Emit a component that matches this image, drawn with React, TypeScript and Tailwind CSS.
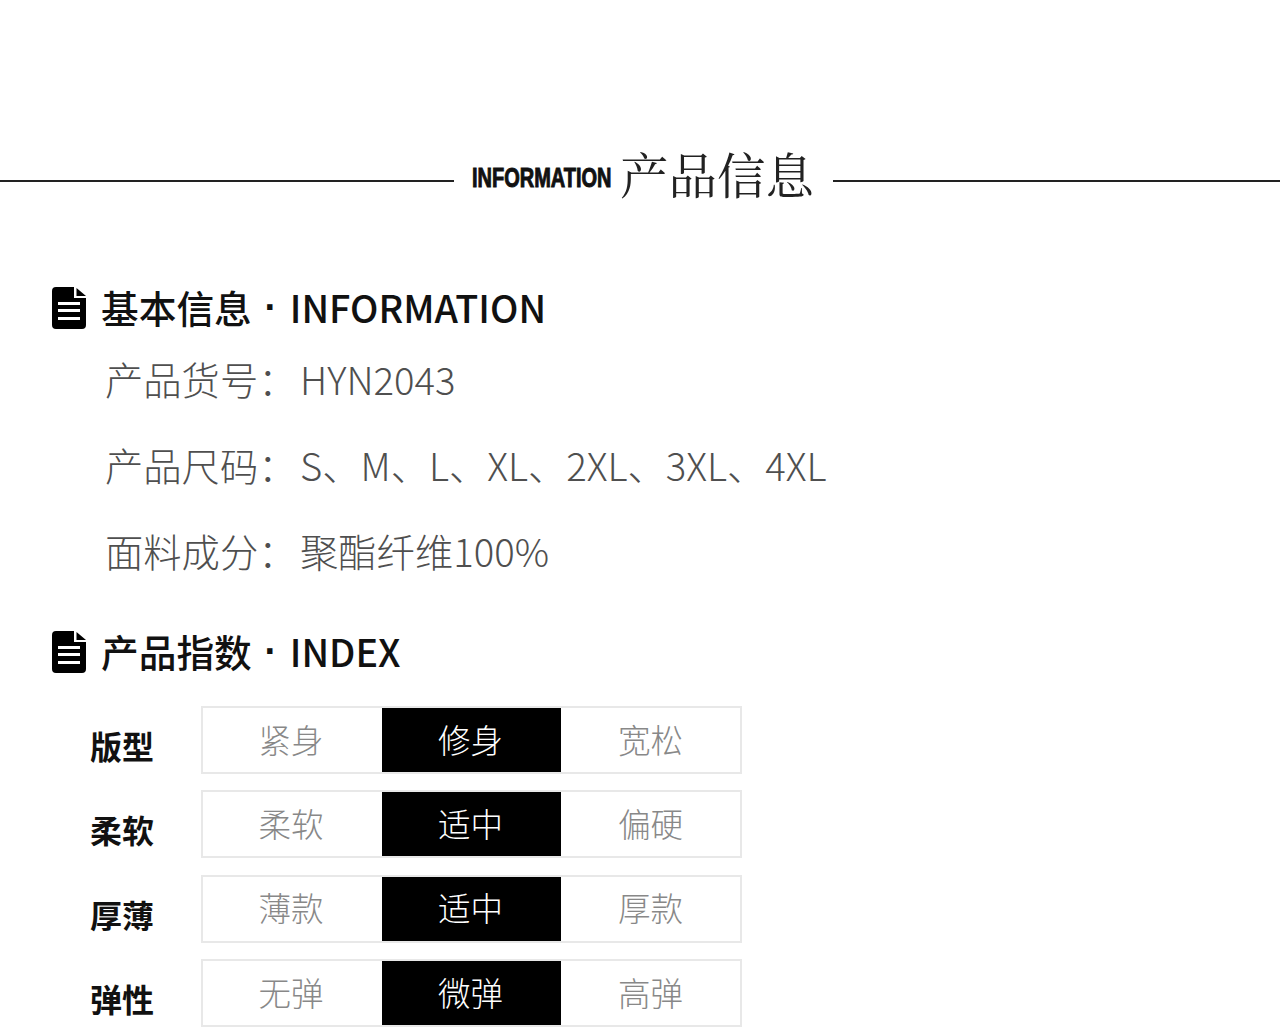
import React from 'react';

const cjk = "font-['Noto_Sans_CJK_SC','Noto_Sans',sans-serif]";

const rows = [
  { label: '版型', options: ['紧身', '修身', '宽松'] },
  { label: '柔软', options: ['柔软', '适中', '偏硬'] },
  { label: '厚薄', options: ['薄款', '适中', '厚款'] },
  { label: '弹性', options: ['无弹', '微弹', '高弹'] },
];

const DocIcon = () => (
  <svg width="34" height="42" viewBox="0 0 34 42" className="shrink-0 mt-[2px]">
    <path
      d="M4 0H22V11H34V38a4 4 0 0 1-4 4H4a4 4 0 0 1-4-4V4a4 4 0 0 1 4-4Z M24.500 1L34 9H24.500Z"
      fill="#000"
    />
    <rect x="6" y="15" width="22" height="3" fill="#fff" />
    <rect x="6" y="22" width="22" height="3" fill="#fff" />
    <rect x="6" y="30" width="22" height="3" fill="#fff" />
  </svg>
);

const SectionTitle = ({ cn, en }: { cn: string; en: string }) => (
  <div className="flex items-center h-[44px] ml-[52px] text-[#111] font-medium whitespace-nowrap">
    <DocIcon />
    <span className="ml-[15px] text-[37.700px] leading-[44px]">{cn}</span>
    <span className="w-[38px] text-center text-[38px] leading-[44px] font-bold font-['Liberation_Sans',sans-serif]">·</span>
    <span className="text-[37.700px] leading-[44px]">{en}</span>
  </div>
);

const InfoLine = ({ label, value }: { label: string; value: string }) => (
  <div className="flex whitespace-nowrap">
    <span className="w-[195px] shrink-0">{label}</span>
    <span>{value}</span>
  </div>
);

export default function App() {
  return (
    <div className={`w-[1280px] h-[1027px] overflow-hidden bg-white ${cjk}`}>
      {/* cabecera */}
      <div className="flex items-center pt-[146px] h-[204px]">
        <div className="h-[2px] bg-[#222] w-[454px] mt-[12px]" />
        <div className="flex items-center flex-1 justify-center">
          <span className="font-['Liberation_Sans',sans-serif] font-bold text-[27px] leading-[32px] mt-[6px] text-[#111] scale-x-[0.74] w-[140px] -ml-[1px] whitespace-nowrap origin-left [-webkit-text-stroke:1px_#111]">INFORMATION</span>
          <span className="ml-[8px] mb-[4px] text-[48.500px] leading-[56px] text-[#222] font-['Noto_Serif_CJK_SC','Noto_Sans_CJK_SC',serif] whitespace-nowrap">产品信息</span>
        </div>
        <div className="h-[2px] bg-[#222] w-[447px] mt-[12px]" />
      </div>

      <div className="mt-[81px]">
        <SectionTitle cn="基本信息" en="INFORMATION" />
      </div>
      <div className="ml-[105px] mt-[21px] flex flex-col gap-[28px] text-[38.300px] leading-[58px] font-light text-[#4f4f4f]">
        <InfoLine label="产品货号：" value="HYN2043" />
        <InfoLine label="产品尺码：" value="S、M、L、XL、2XL、3XL、4XL" />
        <InfoLine label="面料成分：" value="聚酯纤维100%" />
      </div>

      <div className="mt-[49px]">
        <SectionTitle cn="产品指数" en="INDEX" />
      </div>
      <div className="ml-[90px] mt-[33px] flex flex-col gap-[16.330px]">
        {rows.map((row) => (
          <div key={row.label} className="flex items-center h-[68px]">
            <div className="w-[111px] text-[32px] font-bold text-[#111] mt-[10px]">{row.label}</div>
            <div className="grid grid-cols-3 w-[541px] h-[68px] border-2 border-[#e8e8e8]">
              {row.options.map((opt, i) => (
                <div
                  key={opt}
                  className={`flex items-center justify-center text-[32.500px] font-light pb-[2px] ${
                    i === 1 ? 'bg-black text-white pr-[2px]' : i === 0 ? 'text-[#888] pr-[3px]' : 'text-[#888]'
                  }`}
                >
                  {opt}
                </div>
              ))}
            </div>
          </div>
        ))}
      </div>
    </div>
  );
}
